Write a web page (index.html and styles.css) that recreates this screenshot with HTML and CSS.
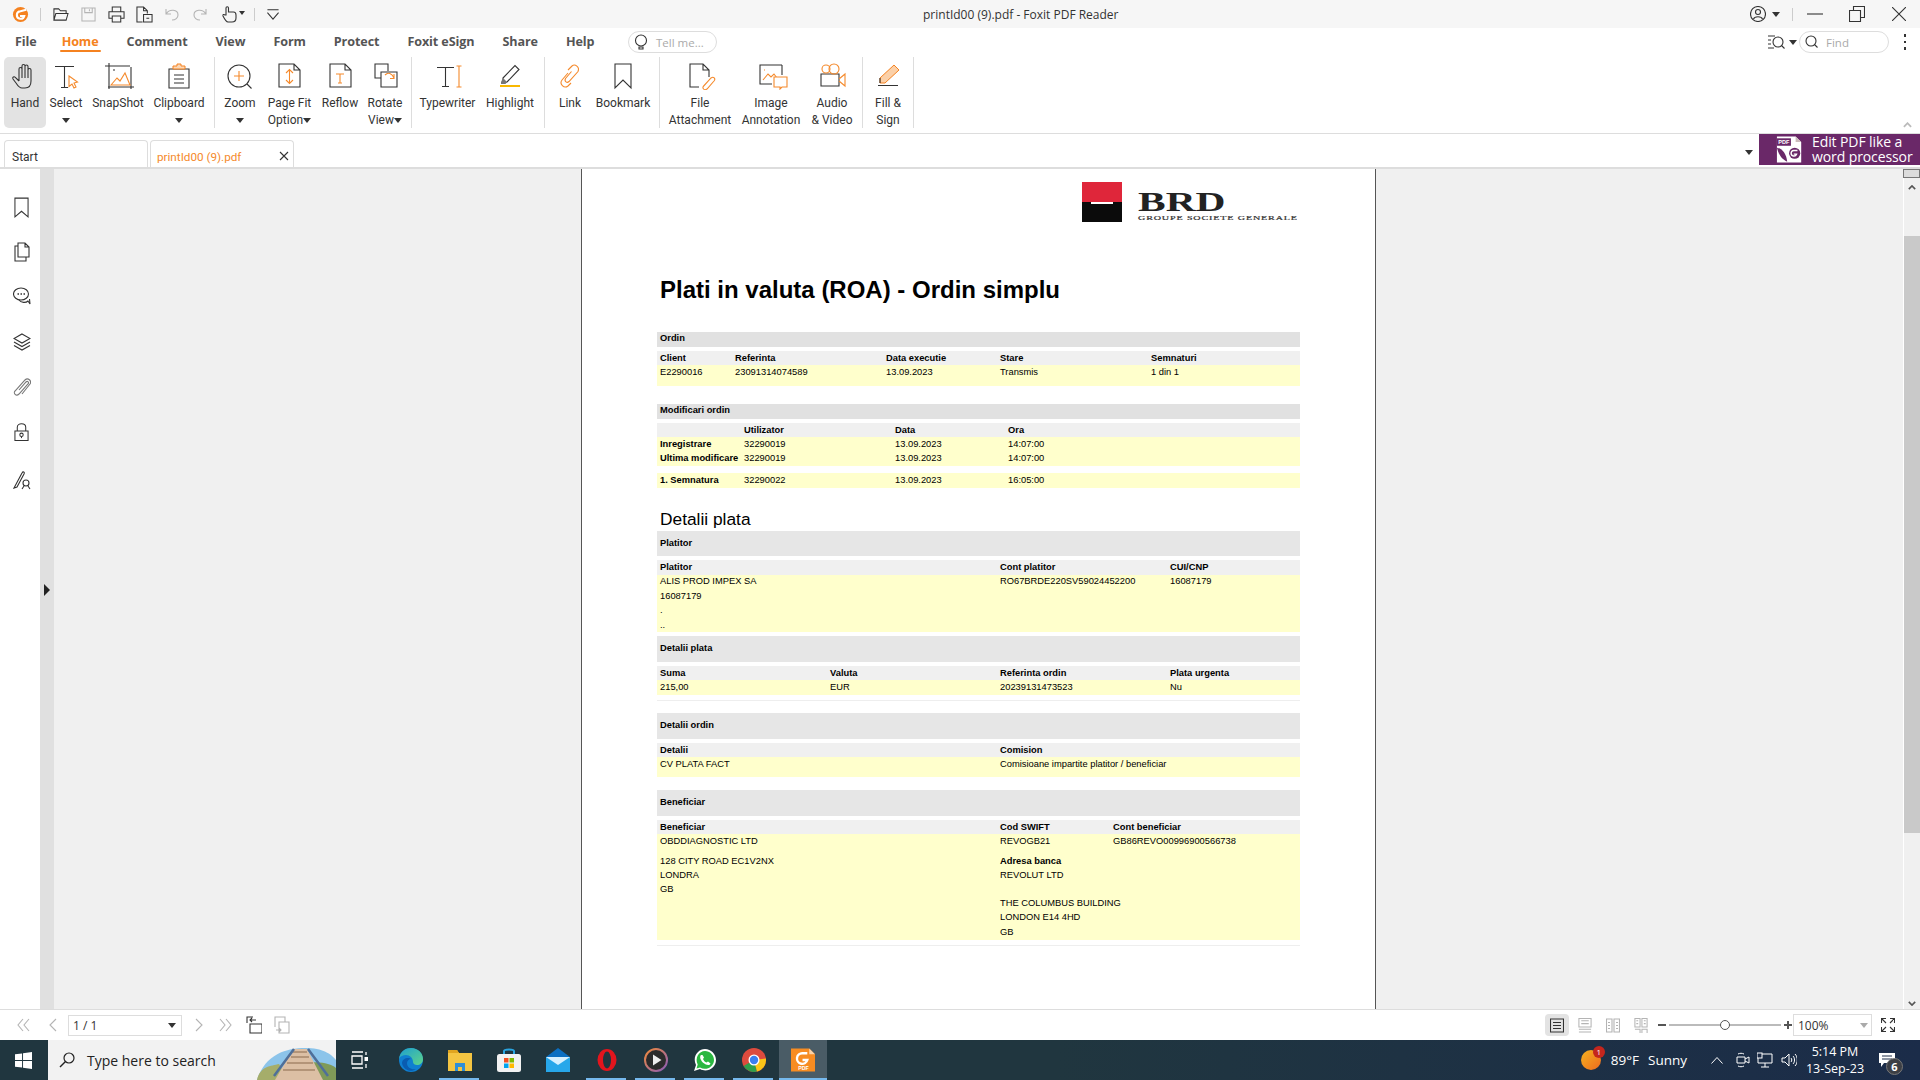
FILE: index.html
```html
<!DOCTYPE html>
<html lang="en">
<head>
<meta charset="utf-8">
<title>printId00 (9).pdf - Foxit PDF Reader</title>
<link rel="stylesheet" href="styles.css">
</head>
<body>
<div class="app">
  <header class="titlebar">
    <div class="quick">
      <svg class="q q-logo" viewBox="0 0 18 18"><circle cx="9" cy="9" r="8" fill="#f58220"/><path d="M15 4 9 5.500a4 4 0 1 0 4 5H8.500" fill="none" stroke="#fff" stroke-width="2.200"/></svg>
      <span class="qsep q-a"></span>
      <svg class="q q-open" viewBox="0 0 18 16"><path d="M2 14V2h5l2 2h6v3M2 14l2-7h13l-2 7Z" class="k"/></svg>
      <svg class="q q-save" viewBox="0 0 16 16"><path d="M1 1h14v14H1ZM4 1v5h8V1M9 2.500v2" class="l"/></svg>
      <svg class="q q-print" viewBox="0 0 18 18"><path d="M4.500 6V1h9v5M4.500 13H1V6h16v7h-3.500M4.500 10.500h9V17h-9Z" class="k"/></svg>
      <svg class="q q-doc" viewBox="0 0 18 18"><path d="M7 17H1V1h7l4 4v3M8 1v4h4M8 9h9v8H8ZM11 13h3" class="k"/></svg>
      <svg class="q q-undo" viewBox="0 0 14 16"><path d="M1 3v5h5M1.500 7.500C4 3 13 3 13 9c0 3-2.500 5-6 5" class="l"/></svg>
      <svg class="q q-redo" viewBox="0 0 14 16"><path d="M13 3v5H8M12.500 7.500C10 3 1 3 1 9c0 3 2.500 5 6 5" class="l"/></svg>
      <svg class="q q-hand" viewBox="0 0 24 18"><path d="M5 10V3a1.200 1.200 0 0 1 2.500 0v4h5c1.500 0 2.500 1 2.500 3v3c0 2.500-1.500 4-4 4H7c-2 0-3-2-5-6-.5-1.500 1-2 2-1Z" class="k"/><path d="m18 6 6 0-3 4Z" fill="#333"/></svg>
      <span class="qsep q-b"></span>
      <svg class="q q-more" viewBox="0 0 14 14"><path d="M1 2h12M1 5l6 7 6-7" class="k"/></svg>
    </div>
    <div class="wintitle">printId00 (9).pdf - Foxit PDF Reader</div>
    <div class="winctl">
      <svg class="w-user" viewBox="0 0 16 16"><circle cx="8" cy="8" r="7.500" class="k"/><circle cx="8" cy="6" r="2.500" class="k"/><path d="M3.500 13c1-3 8-3 9 0" class="k"/></svg>
      <span class="caret w-caret"></span>
      <span class="qsep w-sep"></span>
      <svg class="w-min" viewBox="0 0 16 2"><path d="M0 1h16" class="k"/></svg>
      <svg class="w-max" viewBox="0 0 16 16"><path d="M.5 4.500h11v11H.5ZM4.500 4.500v-4h11v11h-4" class="k"/></svg>
      <svg class="w-close" viewBox="0 0 14 14"><path d="m0 0 14 14M14 0 0 14" class="k"/></svg>
    </div>
  </header>

  <nav class="menubar">
    <div class="menus">
      <span>File</span><span class="active">Home</span><span>Comment</span><span>View</span><span>Form</span><span>Protect</span><span>Foxit eSign</span><span>Share</span><span>Help</span>
    </div>
    <div class="pill tell">
      <svg viewBox="0 0 14 16"><circle cx="7" cy="6.500" r="5.500" class="k"/><path d="M5 13h4v2H5Z" class="k"/></svg>
      <span>Tell me...</span>
    </div>
    <div class="menuright">
      <svg class="m-find" viewBox="0 0 17 14"><path d="M0 1h7M0 5h3M0 9h3M0 13h6" class="k"/><circle cx="10" cy="7" r="5" class="k"/><path d="m13.500 10.500 3 3" class="k"/></svg>
      <span class="caret"></span>
      <div class="pill find">
        <svg viewBox="0 0 14 14"><circle cx="6" cy="6" r="5" class="k"/><path d="m9.500 9.500 3 3" class="k"/></svg>
        <span>Find</span>
      </div>
      <span class="kebab"><i></i><i></i><i></i></span>
    </div>
  </nav>

  <section class="ribbon">
    <div class="item w-hand on">
      <svg class="ico" viewBox="0 0 36 28"><path d="M12 19V7a1.500 1.500 0 0 1 3 0V4a1.500 1.500 0 0 1 3 0v.5a1.500 1.500 0 0 1 3 0V8a1.500 1.500 0 0 1 3 0v11c0 4-2 7-6 7h-3c-3 0-4-2-6-5l-3-4c-1-1.600 1-3 2.300-1.700L12 19M15 7v9M18 4v12M21 5v11" class="k"/></svg>
      <div class="lbl">Hand</div>
    </div>
    <div class="item w-select">
      <svg class="ico" viewBox="0 0 36 28"><path d="M7 4.500h19M16.500 4.500V25M13 25.500h7" class="k"/><path d="m21 14 8.500 6-3.500 1 2 4-2 1-2-4-3 2.500Z" class="o"/></svg>
      <div class="lbl">Select</div>
      <div class="lbl"><span class="caret"></span></div>
    </div>
    <div class="item w-snap">
      <svg class="ico" viewBox="0 0 36 28"><path d="M5 4h25M9 1v26M8 25h26M31 5v22" class="k"/><path d="m11 23 6-7 3 3 5-8 5 12Z" class="o"/><path d="M13 8h2" class="k"/></svg>
      <div class="lbl">SnapShot</div>
    </div>
    <div class="item w-clip">
      <svg class="ico" viewBox="0 0 36 28"><path d="M8 7h20v19H8ZM13 13h10M13 17h10M13 21h10" class="k"/><path d="M12 7V4h4V2h4v2h4v3Z" fill="#fbd9b8" stroke="#f58220"/></svg>
      <div class="lbl">Clipboard</div>
      <div class="lbl"><span class="caret"></span></div>
    </div>
    <span class="sep gap-a"></span>
    <div class="item w-zoom">
      <svg class="ico" viewBox="0 0 36 28"><circle cx="17" cy="14" r="11" class="k"/><path d="m25 22 4.500 4.500" class="k"/><path d="M17 9v10M12 14h10" class="o"/></svg>
      <div class="lbl">Zoom</div>
      <div class="lbl"><span class="caret"></span></div>
    </div>
    <div class="item w-fit">
      <svg class="ico" viewBox="0 0 36 28"><path d="M7 2h15l6 6v17H7ZM22 2v6h6" class="k"/><path d="M17.500 8v13M14 11l3.500-3.500L21 11M14 18l3.500 3.500L21 18" class="o"/></svg>
      <div class="lbl">Page Fit</div>
      <div class="lbl">Option<span class="caret"></span></div>
    </div>
    <div class="item w-reflow">
      <svg class="ico" viewBox="0 0 36 28"><path d="M8 2h15l6 6v17H8ZM23 2v6h6" class="k"/><path d="M14 12h8M18 12v9M16 21h4" class="o"/></svg>
      <div class="lbl">Reflow</div>
    </div>
    <div class="item w-rotate">
      <svg class="ico" viewBox="0 0 36 28"><path d="M14 16H8V2h13v7M14 10h16v15H14Z" class="k"/><path d="M18 13c3-3 7-2 9 3M27 12v4.500h-4" class="o"/></svg>
      <div class="lbl">Rotate</div>
      <div class="lbl">View<span class="caret"></span></div>
    </div>
    <span class="sep gap-b"></span>
    <div class="item w-type">
      <svg class="ico" viewBox="0 0 36 28"><path d="M7 5.500h17M15.500 5.500V24M12 24.500h7" class="k"/><path d="M29 4v21M26.500 4h5M26.500 25h5" class="o"/></svg>
      <div class="lbl">Typewriter</div>
    </div>
    <div class="item w-high">
      <svg class="ico" viewBox="0 0 36 28"><path d="M11 16 23 3.500l4 4L15 20l-4 1Z" class="k"/><path d="m9 20 2-4 4 4-1.500 2H9Z" fill="#777"/><path d="M8 24h20" class="y"/></svg>
      <div class="lbl">Highlight</div>
    </div>
    <span class="sep gap-c"></span>
    <div class="item w-link">
      <svg class="ico" viewBox="0 0 36 28"><path d="m16 8 4-4c3-2.500 8 1 6 5.500l-9 10c-2 2-5 0-3.500-3l6-7M16 11l-6 7c-3 4 2 9 6 6l3-3" class="o"/></svg>
      <div class="lbl">Link</div>
    </div>
    <div class="item w-mark">
      <svg class="ico" viewBox="0 0 36 28"><path d="M10 2h16v24l-8-8-8 8Z" class="k"/></svg>
      <div class="lbl">Bookmark</div>
    </div>
    <span class="sep gap-d"></span>
    <div class="item w-file">
      <svg class="ico" viewBox="0 0 36 28"><path d="M17 25H8V2h13l6 6v7M21 2v6h6" class="k"/><path d="m21 25 8-9c2.500-2 5 .5 3 3l-7 8c-3 2-5-1-3.500-3l6-6.500" class="o"/></svg>
      <div class="lbl">File</div>
      <div class="lbl">Attachment</div>
    </div>
    <div class="item w-image">
      <svg class="ico" viewBox="0 0 36 28"><path d="M24 3H7v19h12M29 3h-5M29 3v10" class="k"/><path d="m10 18 5-6 3 3 3-3 3 4M11 8h1" class="o"/><path d="M21 15h13v10h-5l-2 2v-2h-6Z" class="o wf"/></svg>
      <div class="lbl">Image</div>
      <div class="lbl">Annotation</div>
    </div>
    <div class="item w-audio">
      <svg class="ico" viewBox="0 0 36 28"><path d="M7 12h18v12H7Z" class="k"/><circle cx="12" cy="7" r="4" class="o"/><circle cx="20" cy="7" r="5" class="o"/><path d="m25 17 6-5v12l-6-5" class="o"/></svg>
      <div class="lbl">Audio</div>
      <div class="lbl">&amp; Video</div>
    </div>
    <span class="sep gap-e"></span>
    <div class="item w-fill">
      <svg class="ico" viewBox="0 0 36 28"><path d="m10 16 14-13 5 5-14 13H10Z" fill="#fbd0a8" stroke="#f58220"/><path d="M10 21v-5M8 23.500h20" class="k"/></svg>
      <div class="lbl">Fill &amp;</div>
      <div class="lbl">Sign</div>
    </div>
    <span class="sep gap-f"></span>
    <svg class="collapse" viewBox="0 0 10 6"><path d="m1 5 4-4 4 4" fill="none" stroke="#bbb" stroke-width="2"/></svg>
  </section>

  <div class="tabbar">
    <div class="tab tab-start"><span>Start</span></div>
    <div class="tab tab-doc"><span>printId00 (9).pdf</span><svg viewBox="0 0 10 10"><path d="m1 1 8 8M9 1 1 9" class="k"/></svg></div>
    <span class="caret tab-caret"></span>
    <div class="promo">
      <svg viewBox="0 0 30 28"><path d="M1 0h20l6 6v22H1Z" fill="#fff"/><path d="M21 0v6h6Z" fill="#cbb"/><rect x="1" y="2" width="15" height="8" fill="#6a2868"/><text x="2.500" y="8.500" class="pdf-t">PDF</text><path d="M1 12c6 1 10 7 11 15C5 24 3 19 1 12Z" fill="#6a2868"/><circle cx="20" cy="18" r="6" fill="#6a2868"/><path d="M23 15h-4a3 3 0 1 0 3 4h-3" fill="none" stroke="#fff" stroke-width="1.500"/></svg>
      <div class="promo-text"><div>Edit PDF like a</div><div>word processor</div></div>
    </div>
  </div>

  <main class="workspace">
    <aside class="sidebar">
      <svg class="s1" viewBox="0 0 16 22"><path d="M1 1h14v20l-7-6-7 6Z" class="k"/></svg>
      <svg class="s2" viewBox="0 0 16 20"><path d="M4 15V1h7l4 4v10ZM11 1v4h4M4 4H1v15h11v-4" class="k"/></svg>
      <svg class="s3" viewBox="0 0 18 18"><ellipse cx="8" cy="7" rx="7.500" ry="6" class="k"/><path d="M6 13c2 3 7 3 9 1l2 3-.5-5" class="k"/><path d="M4.500 7h1.500M7.500 7h1.500M10.500 7h1.500" stroke="#333" stroke-width="1.500" fill="none"/></svg>
      <svg class="s4" viewBox="0 0 18 18"><path d="m9 1 8 4.500-8 4.500-8-4.500ZM1 9l8 4.500L17 9M1 12.500 9 17l8-4.500" class="k"/></svg>
      <svg class="s5" viewBox="0 0 18 20"><path d="m6 12 7-8c1.500-1.500 3.500.5 2 2L6 16c-3 3-6-1-4-3L12 2c3-3 7 1 5 4l-8 10" class="g"/></svg>
      <svg class="s6" viewBox="0 0 16 20"><path d="M1 9h14v10H1ZM3.500 9V5c0-5 9-5 9 0v4" class="k"/><circle cx="8" cy="13" r="1.800" class="k"/><path d="M8 15v1.500" class="k"/></svg>
      <svg class="s7" viewBox="0 0 18 20"><path d="M1 18 9 3c1-2 3-1 2 1L4 17ZM1 18l3-1" class="k"/><circle cx="13" cy="13" r="3" class="k"/><path d="m11 16-2 3M15 16l2 3" class="k"/></svg>
    </aside>
    <div class="splitter"><span class="split-arrow"></span></div>
    <div class="viewer">
      <article class="page">
        <div class="brand">
          <div class="brand-mark"><div class="mark-red"></div><div class="mark-black"></div></div>
          <div class="brand-name"><div class="brd">BRD</div><div class="groupe">GROUPE SOCIETE GENERALE</div></div>
        </div>
        <h1>Plati in valuta (ROA) - Ordin simplu</h1>

        <div class="bar b-ordin">Ordin</div>
        <div class="hdr g-ordin"><span>Client</span><span>Referinta</span><span>Data executie</span><span>Stare</span><span>Semnaturi</span></div>
        <div class="yel y-ordin"><div class="g-ordin"><span>E2290016</span><span>23091314074589</span><span>13.09.2023</span><span>Transmis</span><span>1 din 1</span></div></div>

        <div class="bar b-modif">Modificari ordin</div>
        <div class="hdr g-modif"><span></span><span>Utilizator</span><span>Data</span><span>Ora</span></div>
        <div class="yel y-modif">
          <div class="g-modif"><b>Inregistrare</b><span>32290019</span><span>13.09.2023</span><span>14:07:00</span></div>
          <div class="g-modif"><b>Ultima modificare</b><span>32290019</span><span>13.09.2023</span><span>14:07:00</span></div>
        </div>
        <div class="yel y-semn"><div class="g-modif"><b>1. Semnatura</b><span>32290022</span><span>13.09.2023</span><span>16:05:00</span></div></div>

        <h2>Detalii plata</h2>

        <div class="bar tall b-plat">Platitor</div>
        <div class="hdr h15 g-four"><span>Platitor</span><span></span><span>Cont platitor</span><span>CUI/CNP</span></div>
        <div class="yel y-plat">
          <div class="g-four r145 first"><span>ALIS PROD IMPEX SA</span><span></span><span>RO67BRDE220SV59024452200</span><span>16087179</span></div>
          <div class="r145">16087179</div>
          <div class="r145">.</div>
          <div class="r145">..</div>
        </div>

        <div class="bar tall b-next">Detalii plata</div>
        <div class="hdr g-four"><span>Suma</span><span>Valuta</span><span>Referinta ordin</span><span>Plata urgenta</span></div>
        <div class="yel y-suma"><div class="g-four"><span>215,00</span><span>EUR</span><span>20239131473523</span><span>Nu</span></div></div>
        <div class="foot"></div>

        <div class="bar tall b-ord">Detalii ordin</div>
        <div class="hdr g-two"><span>Detalii</span><span>Comision</span></div>
        <div class="yel y-det"><div class="g-two"><span>CV PLATA FACT</span><span>Comisioane impartite platitor / beneficiar</span></div></div>

        <div class="bar tall b-sect">Beneficiar</div>
        <div class="hdr g-ben"><span>Beneficiar</span><span>Cod SWIFT</span><span>Cont beneficiar</span></div>
        <div class="yel y-ben">
          <div class="g-ben"><span>OBDDIAGNOSTIC LTD</span><span>REVOGB21</span><span>GB86REVO00996900566738</span></div>
          <div class="g-two ben-addr">
            <div><div>128 CITY ROAD EC1V2NX</div><div>LONDRA</div><div>GB</div></div>
            <div><b>Adresa banca</b><div>REVOLUT LTD</div><div class="blank"></div><div>THE COLUMBUS BUILDING</div><div>LONDON E14 4HD</div><div class="last-gb">GB</div></div>
          </div>
        </div>
        <div class="foot"></div>
      </article>
    </div>
    <div class="scrollbar">
      <div class="sb-box"></div>
      <svg class="sb-up" viewBox="0 0 10 6"><path d="m1 5 4-4 4 4" fill="none" stroke="#555" stroke-width="2"/></svg>
      <div class="sb-thumb"></div>
      <svg class="sb-down" viewBox="0 0 10 6"><path d="m1 1 4 4 4-4" fill="none" stroke="#555" stroke-width="2"/></svg>
    </div>
  </main>

  <footer class="statusbar">
    <svg class="st-first" viewBox="0 0 13 14"><path d="M6 1 1 7l5 6M12 1 7 7l5 6" class="l"/></svg>
    <svg class="st-prev" viewBox="0 0 8 14"><path d="M7 1 1 7l6 6" class="l"/></svg>
    <div class="pagebox"><span>1 / 1</span><span class="caret"></span></div>
    <svg class="st-next" viewBox="0 0 8 14"><path d="m1 1 6 6-6 6" class="l"/></svg>
    <svg class="st-last" viewBox="0 0 13 14"><path d="m1 1 5 6-5 6M7 1l5 6-5 6" class="l"/></svg>
    <svg class="st-b1" viewBox="0 0 16 18"><path d="M1 7V1h6M10 4H4M6 2 4 4l2 2M4 8h12v9H4Z" class="k"/></svg>
    <svg class="st-b2" viewBox="0 0 16 18"><path d="M1 11V1h10v5M5 6h10v11H5ZM2 14h5M5 12l2 2-2 2" class="l"/></svg>
    <div class="viewmodes">
      <div class="vm on"><svg viewBox="0 0 14 14"><path d="M.5.5h13v13H.5ZM3 4h8M3 7h8M3 10h8" class="k"/></svg></div>
      <div class="vm"><svg viewBox="0 0 14 16"><path d="M.5.5h13v9H.5ZM3 3h8M3 6h8M.5 12h13M.5 15h13" class="l"/></svg></div>
      <div class="vm"><svg viewBox="0 0 14 14"><path d="M.5.5h5.500v13H.5ZM8 .5h5.500v13H8ZM2 4h2M2 7h2M2 10h2M10 4h2M10 7h2M10 10h2" class="l"/></svg></div>
      <div class="vm"><svg viewBox="0 0 14 16"><path d="M.5.5h5.500v9H.5ZM8 .5h5.500v9H8ZM.5 12H6v4M8 16v-4h5.500v4M2 3h2M2 6h2M10 3h2M10 6h2" class="l"/></svg></div>
    </div>
    <span class="z-minus"></span>
    <div class="slider"><span class="knob"></span></div>
    <span class="z-plus"></span>
    <div class="zoombox"><span>100%</span><span class="caret grey"></span></div>
    <svg class="st-full" viewBox="0 0 14 14"><path d="M.5 5V.5H5M.5.5 5 5M9 .5h4.500V5M13.500.5 9 5M.5 9v4.500H5M.5 13.500 5 9M9 13.500h4.500V9M13.500 13.500 9 9" class="k"/></svg>
  </footer>

  <div class="taskbar">
    <svg class="start" viewBox="0 0 18 18"><path d="M0 2.500 7.500 1.500v7H0ZM8.500 1.400 18 0v8.500H8.500ZM0 9.500h7.500v7L0 15.500ZM8.500 9.500H18V18l-9.500-1.400Z" fill="#fff"/></svg>
    <div class="searchbox">
      <svg class="mag" viewBox="0 0 16 16"><circle cx="10" cy="6" r="5" fill="none" stroke="#222" stroke-width="1.200"/><path d="M6.500 9.500 1 15" stroke="#222" stroke-width="1.400"/></svg>
      <span>Type here to search</span>
      <svg class="beach" viewBox="0 0 79 40"><path d="M0 40C8 14 30 8 48 8s26 6 31 12v20Z" fill="#8cc4ea"/><path d="M0 40c3-14 14-14 22-16l10 16Z" fill="#a5ad6a"/><path d="M50 24c10-4 24 0 29 4v12H62Z" fill="#7f9a58"/><path d="M36 9h14l16 31H18Z" fill="#dcbfa4"/><path d="M36 12h14M34 17h18M30 23h26M26 30h32" stroke="#b39478" stroke-width="2"/><path d="M37 9 17 36M51 9l20 27" stroke="#4f6f99" stroke-width="2.500"/></svg>
    </div>
    <svg class="t-view" viewBox="0 0 17 18"><path d="M1 1h11M1 17h11M1 5h10v8H1ZM15 1v3M15 13v4" fill="none" stroke="#fff" stroke-width="1.300"/><rect x="13.500" y="6" width="3.500" height="4" fill="#fff"/></svg>
    <div class="apps">
      <div class="app-i"><svg viewBox="0 0 24 24"><defs><linearGradient id="eg" x1="0" y1="0" x2="1" y2="1"><stop offset="0" stop-color="#1d9fd0"/><stop offset="1" stop-color="#5fd48a"/></linearGradient></defs><circle cx="12" cy="12" r="12" fill="#0f7fd0"/><path d="M0 11C1 3 7 0 12 0c7 0 12 5 12 11 0 4-3 6-6 6-2 0-4-1-4-3 0-4-3-7-7-7-3 0-6 1-7 4Z" fill="url(#eg)"/><path d="M8 15c0 5 5 7 9 6-5 4-13 1-14-6 0-3 3-5 6-5 1.500 0 2 .5 3 1-2 0-4 2-4 4Z" fill="#0a5cb0"/></svg></div>
      <div class="app-i run"><svg viewBox="0 0 24 22"><path d="M0 1h9l2 3h13v18H0Z" fill="#f4c542"/><path d="M0 1h9l2 3H0Z" fill="#e0a520"/><path d="M7 22v-8h10v8h-3v-4h-4v4Z" fill="#2f8fd8"/></svg></div>
      <div class="app-i"><svg viewBox="0 0 24 24"><path d="M7 7V3c0-2 10-2 10 0v4" fill="none" stroke="#2aa5e0" stroke-width="2"/><rect y="6" width="24" height="18" rx="2.500" fill="#f2f2f2"/><rect x="7" y="10" width="4.500" height="4.500" fill="#f25022"/><rect x="12.500" y="10" width="4.500" height="4.500" fill="#7fba00"/><rect x="7" y="15.500" width="4.500" height="4.500" fill="#00a4ef"/><rect x="12.500" y="15.500" width="4.500" height="4.500" fill="#ffb900"/></svg></div>
      <div class="app-i"><svg viewBox="0 0 24 24"><path d="M0 9 12 0l12 9Z" fill="#0b6fc2"/><path d="M0 9h24v15H0Z" fill="#27a7ea"/><path d="M0 9l12 8 12-8Z" fill="#d6f0ff"/></svg></div>
      <div class="app-i run"><svg viewBox="0 0 24 24"><ellipse cx="12" cy="12" rx="9.500" ry="11" fill="#e2151d"/><ellipse cx="12" cy="12" rx="4" ry="8.500" fill="#20363f"/></svg></div>
      <div class="app-i run"><svg viewBox="0 0 24 24"><defs><linearGradient id="mg" x1="0" y1="0" x2="1" y2="1"><stop offset="0" stop-color="#f08a3a"/><stop offset="1" stop-color="#8a5cb8"/></linearGradient></defs><circle cx="12" cy="12" r="11" fill="#2b2b2b" stroke="url(#mg)" stroke-width="2"/><path d="M9 6.500v11l8.500-5.500Z" fill="#eee"/></svg></div>
      <div class="app-i run"><svg viewBox="0 0 24 24"><path d="M1 23l2-6C-1 9 5 1 12 1c6 0 11 5 11 11 0 8-9 13-16 9Z" fill="#fff"/><path d="M3.500 20.500l1.200-4C1.500 10 6 3 12 3c5 0 9 4 9 9 0 7-8 11-14 7.500Z" fill="#2bb741"/><path d="M8 7c-2 2 0 6 2.500 8s6 3 7 .5l-2.500-2-1.500 1c-1.500-.5-3-2-3.500-3.500l1-1.500L9.500 7Z" fill="#fff"/></svg></div>
      <div class="app-i run"><svg viewBox="0 0 24 24"><circle cx="12" cy="12" r="12" fill="#dd4b3e"/><path d="M12 12 1.600 18A12 12 0 0 0 15 23.600Z" fill="#2fa04c"/><path d="M12 12 15 23.600A12 12 0 0 0 23.900 10.500 Z" fill="#fbc518"/><circle cx="12" cy="12" r="5.500" fill="#fff"/><circle cx="12" cy="12" r="4.200" fill="#3c7ff0"/></svg></div>
      <div class="app-i active-app"><svg viewBox="0 0 25 24"><path d="M0 0h19l6 6v18H0Z" fill="#f78c22"/><path d="M19 0v6h6Z" fill="#fbd3a8"/><path d="M17 5h-5a5.500 5.500 0 1 0 5 7h-5" fill="none" stroke="#fff" stroke-width="2.500"/><text x="7.500" y="22.500" class="pdf-t small">PDF</text></svg></div>
    </div>
    <div class="tray">
      <div class="weather"><span class="sun"></span><span class="badge">1</span></div>
      <span class="temp">89°F</span><span class="cond">Sunny</span>
      <svg class="tr-up" viewBox="0 0 12 7"><path d="m.5 6.500 5.500-6 5.500 6" class="w"/></svg>
      <svg class="tr-meet" viewBox="0 0 14 16"><path d="M1 5h8v6H1ZM9 7l4-2v6l-4-2M2 2c2-1 4-1 6 0M2 14c2 1 4 1 6 0" class="w"/></svg>
      <svg class="tr-net" viewBox="0 0 16 16"><path d="M1 2h14v9H1ZM8 11v4M4 15h8" class="w"/><rect y="1" width="5" height="5" fill="#1c2c48" stroke="#fff"/></svg>
      <svg class="tr-vol" viewBox="0 0 16 14"><path d="M1 5h3l4-4v12L4 9H1ZM10 5c1 1 1 3 0 4M12 3c2 2 2 6 0 8M14 1c3 3 3 9 0 12" class="w"/></svg>
      <div class="clock"><div>5:14 PM</div><div>13-Sep-23</div></div>
      <div class="notif">
        <svg viewBox="0 0 16 14"><path d="M0 0h16v10H5l-3 4v-4H0Z" fill="#fff"/><path d="M3 3h10M3 6h10" stroke="#1c2c48"/></svg>
        <span class="nbadge">6</span>
      </div>
    </div>
  </div>
</div>
</body>
</html>
```
FILE: styles.css
```css
* { box-sizing: border-box; }
html, body { margin: 0; padding: 0; height: 100%; overflow: hidden; }
body { font-family: "Open Sans", "Noto Sans", sans-serif; color: #333; background: #fff; }
svg { display: block; flex: none; }
.k { fill: none; stroke: #333; stroke-width: 1.100; }
.l { fill: none; stroke: #b4b4b4; stroke-width: 1.100; }
.g { fill: none; stroke: #777; stroke-width: 1.100; }
.o { fill: none; stroke: #f58a2c; stroke-width: 1.100; }
.wf { fill: #fff; }
.y { fill: none; stroke: #f9b800; stroke-width: 2; }
.w { fill: none; stroke: #fff; stroke-width: 1; }
.caret { display: inline-block; width: 0; height: 0; border: 4px solid transparent; border-top: 5px solid #333; border-bottom: 0; vertical-align: middle; }
.caret.grey { border-top-color: #aaa; }

.app { width: 1920px; height: 1080px; display: flex; flex-direction: column; }

/* title bar */
.titlebar { height: 28px; background: #f6f6f6; display: flex; align-items: center; flex: none; }
.quick { width: 923px; display: flex; align-items: center; flex: none; padding-left: 12px; }
.q-logo { width: 17px; height: 17px; }
.qsep { width: 1px; height: 13px; background: #ccc; flex: none; }
.q-a { margin-left: 11px; }
.q-open { width: 17px; height: 15px; margin-left: 11px; }
.q-save { width: 15px; height: 15px; margin-left: 12px; }
.q-print { width: 17px; height: 17px; margin-left: 12px; }
.q-doc { width: 17px; height: 17px; margin-left: 11px; }
.q-undo { width: 14px; height: 16px; margin-left: 12px; }
.q-redo { width: 14px; height: 16px; margin-left: 14px; }
.q-hand { width: 24px; height: 18px; margin-left: 14px; }
.q-b { margin-left: 9px; }
.q-more { width: 14px; height: 13px; margin-left: 11px; }
.wintitle { font-size: 12px; color: #333; white-space: nowrap; }
.winctl { margin-left: auto; display: flex; align-items: center; height: 28px; }
.w-user { width: 16px; height: 16px; }
.w-caret { margin-left: 6px; }
.w-sep { margin-left: 12px; }
.w-min { width: 16px; height: 2px; margin-left: 14px; }
.w-max { width: 16px; height: 16px; margin-left: 26px; }
.w-close { width: 14px; height: 14px; margin-left: 27px; margin-right: 14px; }

/* menu */
.menubar { height: 28px; display: flex; align-items: center; flex: none; background: #fff; }
.menus { display: flex; gap: 28px; padding-left: 15px; font-size: 12.600px; font-weight: 700; color: #555; letter-spacing: -.1px; width: 628px; flex: none; line-height: 28px; }
.menus span:first-child { margin-right: -3px; }
.menus .active { color: #f58220; position: relative; }
.menus .active::after { content: ""; position: absolute; left: -2px; right: -3px; top: 22px; height: 2px; background: #f58220; border-radius: 1px; }
.pill { height: 22px; border: 1px solid #ddd; border-radius: 11px; display: flex; align-items: center; font-size: 11.500px; color: #aaa; }
.tell { width: 89px; padding-left: 5px; gap: 8px; }
.tell svg { width: 14px; height: 16px; }
.find { width: 90px; padding-left: 5px; gap: 7px; margin-left: 2px; }
.find svg { width: 14px; height: 14px; }
.menuright { margin-left: auto; display: flex; align-items: center; }
.m-find { width: 17px; height: 14px; margin-right: 4px; }
.kebab { display: flex; flex-direction: column; gap: 4px; margin: 0 14px 0 15px; }
.kebab i { width: 2px; height: 2.500px; background: #333; display: block; }

/* ribbon */
.ribbon { height: 78px; flex: none; display: flex; padding: 1px 0 0 4px; border-bottom: 1px solid #ddd; position: relative; }
.item { height: 71px; padding-top: 5px; text-align: center; font: 12px Roboto, "Open Sans", sans-serif; flex: none; color: #333; }
.item.on { background: #e3e3e3; border-radius: 5px; }
.ico { width: 36px; height: 28px; margin: 0 auto 5px; }
.lbl { line-height: 17px; height: 17px; white-space: nowrap; }
.sep { width: 1px; height: 71px; background: #ddd; flex: none; }
.w-hand { width: 42px; }
.w-select { width: 40px; }
.w-snap { width: 64px; }
.w-clip { width: 58px; }
.gap-a { margin: 0 4px 0 6px; }
.w-zoom { width: 42px; }
.w-fit { width: 57px; }
.w-reflow { width: 44px; }
.w-rotate { width: 46px; }
.gap-b { margin: 0 4px 0 3px; }
.w-type { width: 63px; }
.w-high { width: 62px; }
.gap-c { margin: 0 5px 0 3px; }
.w-link { width: 40px; }
.w-mark { width: 62px; margin-left: 2px; }
.gap-d { margin: 0 4px 0 5px; }
.w-file { width: 72px; }
.w-image { width: 66px; margin-left: 2px; }
.w-audio { width: 52px; margin-left: 2px; }
.gap-e { margin: 0 5px 0 4px; }
.w-fill { width: 40px; }
.gap-f { margin-left: 5px; }
.collapse { position: absolute; right: 8px; top: 66px; width: 9px; height: 6px; }

/* tabs */
.tabbar { height: 35px; flex: none; display: flex; align-items: flex-end; padding-left: 4px; gap: 2px; border-bottom: 2px solid #ddd; font: 12px Roboto, "Open Sans", sans-serif; }
.tab { height: 27px; border: 1px solid #ddd; border-bottom: 0; border-radius: 4px 4px 0 0; display: flex; align-items: center; padding: 6px 0 0 7px; color: #333; }
.tab-start { width: 144px; }
.tab-doc { width: 144px; color: #f58a2c; justify-content: space-between; padding: 4px 4px 0 6px; font-size: 11.700px; }
.tab-doc span { padding-top: 2px; }
.tab-doc svg { width: 10px; height: 10px; }
.tab-caret { margin: 0 4px 12px auto; }
.promo { width: 161px; height: 31px; background: #6a2868; margin-bottom: 2px; display: flex; align-items: center; color: #fff; margin-left: 0; padding-left: 17px; }
.promo svg { width: 28px; height: 27px; }
.promo-text { font: 14px/14.500px "Open Sans", sans-serif; margin-left: 8px; white-space: nowrap; letter-spacing: -.1px; }
.pdf-t { font: 700 6px "Liberation Sans", sans-serif; fill: #fff; }
.pdf-t.small { font-size: 5.500px; }

/* workspace */
.workspace { flex: 1; min-height: 0; display: flex; background: #f0f0f0; border-bottom: 1px solid #ddd; }
.sidebar { width: 40px; background: #fff; flex: none; display: flex; flex-direction: column; align-items: center; padding-top: 28px; }
.sidebar svg { margin-left: 3px; }
.s1 { width: 15px; height: 21px; }
.s2 { width: 16px; height: 20px; margin-top: 24px; }
.s3 { width: 18px; height: 18px; margin-top: 25px; }
.s4 { width: 18px; height: 18px; margin-top: 28px; }
.s5 { width: 18px; height: 20px; margin-top: 27px; }
.s6 { width: 15px; height: 20px; margin-top: 24px; }
.s7 { width: 18px; height: 20px; margin-top: 28px; }
.splitter { width: 14px; background: #e0e0e0; flex: none; padding-top: 415px; padding-left: 4px; }
.split-arrow { display: block; width: 0; height: 0; border: 6px solid transparent; border-left: 6px solid #222; border-right: 0; }
.viewer { flex: 1; min-width: 0; padding-left: 527px; overflow: hidden; }
.page { width: 795px; height: 841px; background: #fff; border-left: 1px solid #555; border-right: 1px solid #555; padding: 13px 0 0 75px; font: 9.330px/14px "Liberation Sans", Arial, sans-serif; color: #000; }
.brand { display: flex; height: 40px; padding-left: 425px; }
.brand-mark { width: 40px; height: 40px; flex: none; display: flex; flex-direction: column; }
.mark-red { height: 20px; background: #df263a; }
.mark-black { height: 20px; background: #0b0b0b; border-top: 0; position: relative; }
.mark-black::before { content: ""; position: absolute; left: 9px; top: 0; width: 22px; height: 1.500px; background: #fff; }
.brand-name { margin-left: 16px; font-family: "Liberation Serif", serif; color: #222; }
.brd { font-size: 28px; font-weight: 700; line-height: 26px; height: 33px; padding-top: 7px; transform: scaleX(1.480); transform-origin: left center; }
.groupe { font-size: 7px; line-height: 7px; letter-spacing: .6px; white-space: nowrap; color: #333; transform: scaleX(1.440); transform-origin: left center; -webkit-text-stroke: .2px #333; }
h1 { margin: 54px 0 0 3px; font: 700 24px/28px "Liberation Sans", Arial, sans-serif; color: #000; height: 28px; }
h2 { margin: 21px 0 0 3px; font: 400 17.330px/20px "Liberation Sans", Arial, sans-serif; color: #000; height: 20px; }
.bar { width: 643px; height: 15px; background: #e1e1e1; padding-left: 3px; font-weight: 700; line-height: 12px; }
.bar.tall { height: 26px; padding-top: 6px; background: #e6e6e6; }
.b-ordin { margin-top: 28px; }
.b-modif { margin-top: 18px; }
.bar.b-plat { margin-top: 2px; height: 25px; }
.b-next { margin-top: 4px; }
.b-ord { margin-top: 12px; }
.b-sect { margin-top: 13px; }
.hdr { width: 643px; height: 14px; background: #f0f0f0; margin-top: 4px; padding-left: 3px; font-weight: 700; }
.hdr.h15 { height: 15px; }
.yel { width: 643px; background: #ffffcc; padding-left: 3px; }
.y-ordin { height: 21px; }
.y-modif { height: 29px; }
.y-semn { height: 15px; margin-top: 7px; }
.y-plat { height: 57px; display: flow-root; }
.y-suma { height: 15px; }
.y-det { height: 20px; }
.y-ben { height: 106px; }
.foot { width: 643px; height: 6px; border-bottom: 1px solid #eee; }
.r145 { line-height: 14.500px; height: 14.500px; }
.first { margin-top: -1px; }
.g-ordin { display: grid; grid-template-columns: 75px 151px 114px 151px 1fr; }
.g-modif { display: grid; grid-template-columns: 84px 151px 113px 1fr; white-space: nowrap; }
.g-four { display: grid; grid-template-columns: 170px 170px 170px 1fr; }
.g-two { display: grid; grid-template-columns: 340px 1fr; }
.g-ben { display: grid; grid-template-columns: 340px 113px 1fr; }
.ben-addr { margin-top: 6px; }
.blank { height: 14px; }
.last-gb { margin-top: 1px; }

/* scrollbar */
.scrollbar { width: 17px; flex: none; border-left: 1px solid #fff; display: flex; flex-direction: column; align-items: center; position: relative; background: #f0f0f0; }
.sb-box { width: 17px; height: 9px; background: #dcdcdc; border: 1px solid #777; margin-left: -1px; }
.sb-up { width: 8px; height: 5px; margin-top: 7px; }
.sb-thumb { width: 16px; height: 597px; background: #c9c9c9; margin-top: 46px; }
.sb-down { width: 8px; height: 5px; margin-top: auto; margin-bottom: 3px; }

/* status */
.statusbar { height: 30px; flex: none; display: flex; align-items: center; background: #fff; position: relative; font-size: 12px; }
.st-first { width: 13px; height: 14px; margin-left: 17px; }
.st-prev { width: 8px; height: 14px; margin-left: 19px; }
.pagebox { width: 114px; height: 21px; border: 1px solid #ddd; margin-left: 11px; display: flex; align-items: center; justify-content: space-between; padding: 0 5px 0 4px; color: #333; }
.st-next { width: 8px; height: 14px; margin-left: 13px; }
.st-last { width: 13px; height: 14px; margin-left: 16px; }
.st-b1 { width: 16px; height: 18px; margin-left: 14px; }
.st-b2 { width: 16px; height: 18px; margin-left: 12px; }
.viewmodes { display: flex; margin-left: auto; gap: 4px; }
.vm { width: 24px; height: 22px; display: flex; align-items: center; justify-content: center; border-radius: 4px; }
.vm.on { background: #e3e3e3; }
.vm svg { width: 14px; height: 15px; }
.z-minus { width: 8px; height: 2px; background: #555; margin-left: 5px; }
.slider { width: 112px; height: 2px; background: #bbb; margin-left: 3px; position: relative; }
.knob { position: absolute; left: 51px; top: -4px; width: 10px; height: 10px; border-radius: 50%; background: #fff; border: 1px solid #555; }
.z-plus { width: 8px; height: 8px; margin-left: 3px; background: linear-gradient(#555,#555) center/8px 2px no-repeat, linear-gradient(#555,#555) center/2px 8px no-repeat; }
.zoombox { width: 79px; height: 22px; border: 1px solid #ddd; margin-left: 1px; display: flex; align-items: center; justify-content: space-between; padding: 0 3px 0 4px; color: #333; }
.st-full { width: 14px; height: 14px; margin: 0 25px 0 9px; }

/* taskbar */
.taskbar { height: 40px; flex: none; display: flex; align-items: center; background: linear-gradient(90deg, #20363f 0%, #20363f 55%, #1b2c49 100%); color: #fff; }
.start { width: 17px; height: 17px; margin-left: 15px; }
.searchbox { width: 288px; height: 40px; background: #f2f2f2; margin-left: 16px; display: flex; align-items: center; color: #222; font-size: 14px; padding-left: 11px; flex: none; }
.mag { width: 16px; height: 16px; margin-right: 12px; }
.beach { width: 79px; height: 40px; margin-left: auto; }
.t-view { width: 17px; height: 18px; margin-left: 15px; }
.apps { display: flex; align-items: center; height: 40px; margin-left: 18px; }
.app-i { width: 49px; height: 40px; display: flex; align-items: center; justify-content: center; position: relative; flex: none; }
.app-i svg { width: 24px; height: 24px; }
.app-i.run::after, .active-app::after { content: ""; position: absolute; left: 4px; right: 5px; bottom: 0; height: 2px; background: #76b9ed; }
.active-app { width: 48px; background: #4a5c66; margin-left: 1px; }
.active-app::after { left: 0; right: 0; }
.tray { margin-left: auto; display: flex; align-items: center; height: 40px; font-size: 13.500px; }
.weather { width: 20px; height: 20px; position: relative; }
.sun { display: block; width: 20px; height: 20px; border-radius: 50%; background: linear-gradient(135deg, #f5b21f, #ec6a1f); }
.badge { position: absolute; right: -4px; top: -4px; width: 12px; height: 12px; border-radius: 50%; background: #c4261d; font-size: 8px; line-height: 12px; text-align: center; }
.temp { margin-left: 10px; }
.cond { margin-left: 9px; }
.tr-up { width: 12px; height: 7px; margin-left: 24px; }
.tr-meet { width: 14px; height: 16px; margin-left: 13px; }
.tr-net { width: 16px; height: 16px; margin-left: 7px; }
.tr-vol { width: 16px; height: 14px; margin-left: 8px; }
.clock { width: 60px; margin-left: 8px; text-align: center; font-size: 12.500px; line-height: 17px; }
.notif { position: relative; width: 16px; height: 14px; margin: 0 25px 0 14px; }
.notif svg { width: 16px; height: 14px; }
.nbadge { position: absolute; left: 7px; top: 5px; width: 17px; height: 17px; border-radius: 50%; background: #3c3f45; border: 1px solid #777; font-size: 11px; font-weight: 700; line-height: 15px; text-align: center; }
```
